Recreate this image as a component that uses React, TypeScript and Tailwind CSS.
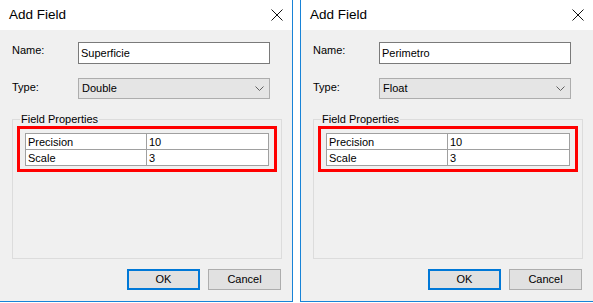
import React, { FunctionComponent } from "react";

type Props = {
  name: string;
  type: string;
  first?: boolean;
};

const CloseIcon = () => (
  <svg width="12" height="12" viewBox="0 0 12 12" className="block">
    <path d="M0.5 0.5 L11.5 11.5 M11.5 0.5 L0.5 11.5" stroke="#111" strokeWidth="1" fill="none" />
  </svg>
);

const Chevron = () => (
  <svg width="9" height="5" viewBox="0 0 9 5" className="block">
    <path d="M0.5 0.5 L4.5 4.5 L8.5 0.5" stroke="#606060" strokeWidth="1" fill="none" />
  </svg>
);

const Dialog: FunctionComponent<Props> = ({ name, type, first }) => {
  return (
    <div
      className={
        first
          ? "-ml-px flex h-[302px] w-[294px] flex-col border-x border-b border-[#1883d7]"
          : "flex h-[302px] w-[294px] flex-col border-x border-b border-[#1883d7]"
      }
    >
      {/* title bar */}
      <div className="flex h-[30px] items-center justify-between bg-white pl-[9px] pr-[9px]">
        <span className="text-[13.5px] leading-none text-black">Add Field</span>
        <CloseIcon />
      </div>

      <div className="flex-1 bg-[#f0f0f0] px-[12px] pt-[12px]">
        <div className="flex">
          <div className="w-[66px] pt-[1px] leading-[14px]">Name:</div>
          <div className="flex h-[22px] w-[192px] items-center border border-[#7a7a7a] bg-white px-[2px]">
            {name}
          </div>
        </div>

        <div className="mt-[14px] flex">
          <div className="w-[66px] pt-[2px] leading-[14px]">Type:</div>
          <div className="flex h-[21px] w-[192px] items-center justify-between border border-[#adadad] bg-[#e5e5e5] pl-[3px] pr-[5px]">
            <span>{type}</span>
            <Chevron />
          </div>
        </div>

        <fieldset className="mt-[13px] h-[147px] w-[270px] border border-[#dcdcdc] px-[4px]">
          <legend className="ml-[3px] px-px leading-[14px]">Field Properties</legend>
          <div className="border-[3px] border-[#ff0000] px-[5px] pb-[3px] pt-[4px]">
            <table className="w-full border-collapse bg-white">
              <tbody>
                <tr className="h-[16px]">
                  <td className="w-[121px] border border-[#a0a0a0] px-[2px] py-0 leading-[14px]">Precision</td>
                  <td className="border border-[#a0a0a0] px-[2px] py-0 leading-[14px]">10</td>
                </tr>
                <tr className="h-[16px]">
                  <td className="border border-[#a0a0a0] px-[2px] py-0 leading-[14px]">Scale</td>
                  <td className="border border-[#a0a0a0] px-[2px] py-0 leading-[14px]">3</td>
                </tr>
              </tbody>
            </table>
          </div>
        </fieldset>

        <div className="-mr-px mt-[10px] flex justify-end gap-[8px]">
          <button className="flex h-[21px] w-[73px] items-center justify-center border-2 border-[#0078d7] bg-[#e1e1e1]">
            OK
          </button>
          <button className="flex h-[21px] w-[73px] items-center justify-center border border-[#adadad] bg-[#e1e1e1]">
            Cancel
          </button>
        </div>
      </div>
    </div>
  );
};

const App = () => {
  return (
    <div
      className="flex h-[303px] w-[593px] gap-[7px] overflow-hidden bg-white text-[11px] text-black"
      style={{ fontFamily: '"Liberation Sans", Arial, sans-serif' }}
    >
      <Dialog name="Superficie" type="Double" first />
      <Dialog name="Perimetro" type="Float" />
    </div>
  );
};

export default App;
